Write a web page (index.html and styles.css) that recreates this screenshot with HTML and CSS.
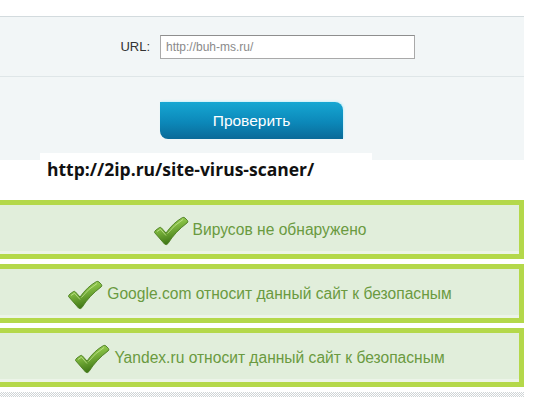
FILE: index.html
```html
<!DOCTYPE html>
<html lang="ru">
<head>
    <meta charset="UTF-8">
    <title>Проверка сайта на вирусы</title>
    <link rel="stylesheet" href="styles.css">
</head>
<body>
    <div class="page">
        <div class="check-panel">
            <div class="url-row">
                <label for="url">URL:</label>
                <input type="text" id="url" value="http://buh-ms.ru/">
            </div>
            <div class="submit-row">
                <button class="check-button">Проверить</button>
            </div>
        </div>

        <div class="source-link">http://2ip.ru/site-virus-scaner/</div>

        <div class="results">
            <div class="result">
                <svg class="tick" viewBox="0 0 36 30" width="36" height="30"><use href="#tick"/></svg>
                <span>Вирусов не обнаружено</span>
            </div>
            <div class="result">
                <svg class="tick" viewBox="0 0 36 30" width="36" height="30"><use href="#tick"/></svg>
                <span>Google.com относит данный сайт к безопасным</span>
            </div>
            <div class="result">
                <svg class="tick" viewBox="0 0 36 30" width="36" height="30"><use href="#tick"/></svg>
                <span>Yandex.ru относит данный сайт к безопасным</span>
            </div>
        </div>

        <div class="dots"></div>
    </div>

    <svg width="0" height="0" class="defs">
        <defs>
            <linearGradient id="tickFill" x1="0" y1="0" x2="0.35" y2="1">
                <stop offset="0" stop-color="#b6df74"/>
                <stop offset="0.4" stop-color="#86bf44"/>
                <stop offset="1" stop-color="#3d7514"/>
            </linearGradient>
            <g id="tick">
                <path d="M1.5 16.5 Q1.5 15 3 14 L6.5 11.5 Q7.5 11 8.5 12 L13 17 Q20 7 29.5 1.5 Q31 1 32 2 L34.5 4.5 Q35.5 6 34 7 Q22 16 15 27.5 Q13.5 29.5 11.5 28 Z"
                      fill="url(#tickFill)" stroke="#4a7c20" stroke-width="0.9" stroke-linejoin="round"/>
                <path d="M4 15.5 L7.5 13.2 L13 19.5 M14.5 17.5 Q21 9 30 3.5" fill="none" stroke="#d9f2ad" stroke-width="1" opacity="0.6"/>
            </g>
        </defs>
    </svg>
</body>
</html>
```

FILE: styles.css
```css
body {
    margin: 0;
    background: #fff;
    font-family: "Liberation Sans", Arial, sans-serif;
    overflow: hidden;
}

.page {
    width: 524px;
    padding-top: 16px;
}

.defs {
    position: absolute;
}

/* top form panel */
.check-panel {
    background: #f2f6f7;
    border-top: 1px solid #d3dbde;
}

.url-row {
    display: flex;
    align-items: center;
    height: 59px;
    border-bottom: 1px solid #dfe6e8;
}

.url-row label {
    width: 150px;
    padding-right: 10px;
    text-align: right;
    font-size: 13px;
    color: #333;
}

.url-row input {
    width: 255px;
    height: 24px;
    box-sizing: border-box;
    margin: 0;
    padding: 0 5px;
    border: 1px solid #a9a9a9;
    border-top-color: #8e8e8e;
    background: #fff;
    font-family: "Liberation Sans", Arial, sans-serif;
    font-size: 12px;
    color: #8a8a8a;
}

.submit-row {
    height: 83px;
    padding-top: 25px;
    padding-left: 160px;
    box-sizing: border-box;
}

.check-button {
    width: 183px;
    height: 37px;
    border: none;
    border-radius: 0 8px 0 8px;
    background: linear-gradient(#16a7d3, #0c88b9 55%, #0a6a98);
    box-shadow: 1px -1px 2px #c9f1fb;
    color: #fff;
    font-family: "Liberation Sans", Arial, sans-serif;
    font-size: 15.5px;
}

/* pasted caption */
.source-link {
    width: 325px;
    height: 32px;
    margin-top: -7px;
    margin-left: 40px;
    padding-left: 7px;
    background: #fff;
    font-family: "Open Sans", sans-serif;
    font-weight: 700;
    font-size: 17.5px;
    line-height: 32px;
    color: #111;
    position: relative;
}

/* scan results */
.results {
    display: flex;
    flex-direction: column;
    gap: 5px;
    margin-top: 15px;
    margin-left: -5px;
}

.result {
    display: flex;
    align-items: center;
    justify-content: center;
    gap: 4px;
    height: 59px;
    box-sizing: border-box;
    border: 5px solid #b4d84a;
    background: #e1eedb;
    box-shadow: inset 0 -3px 0 #ecf4e8;
    font-size: 15.6px;
    color: #6a9a40;
}

.result .tick {
    flex: none;
    margin-top: 2px;
}

.dots {
    height: 5px;
    margin-top: 5px;
    background-image: conic-gradient(#cfd4d6 25%, transparent 0 50%, #cfd4d6 0 75%, transparent 0);
    background-size: 2px 2px;
}
```
